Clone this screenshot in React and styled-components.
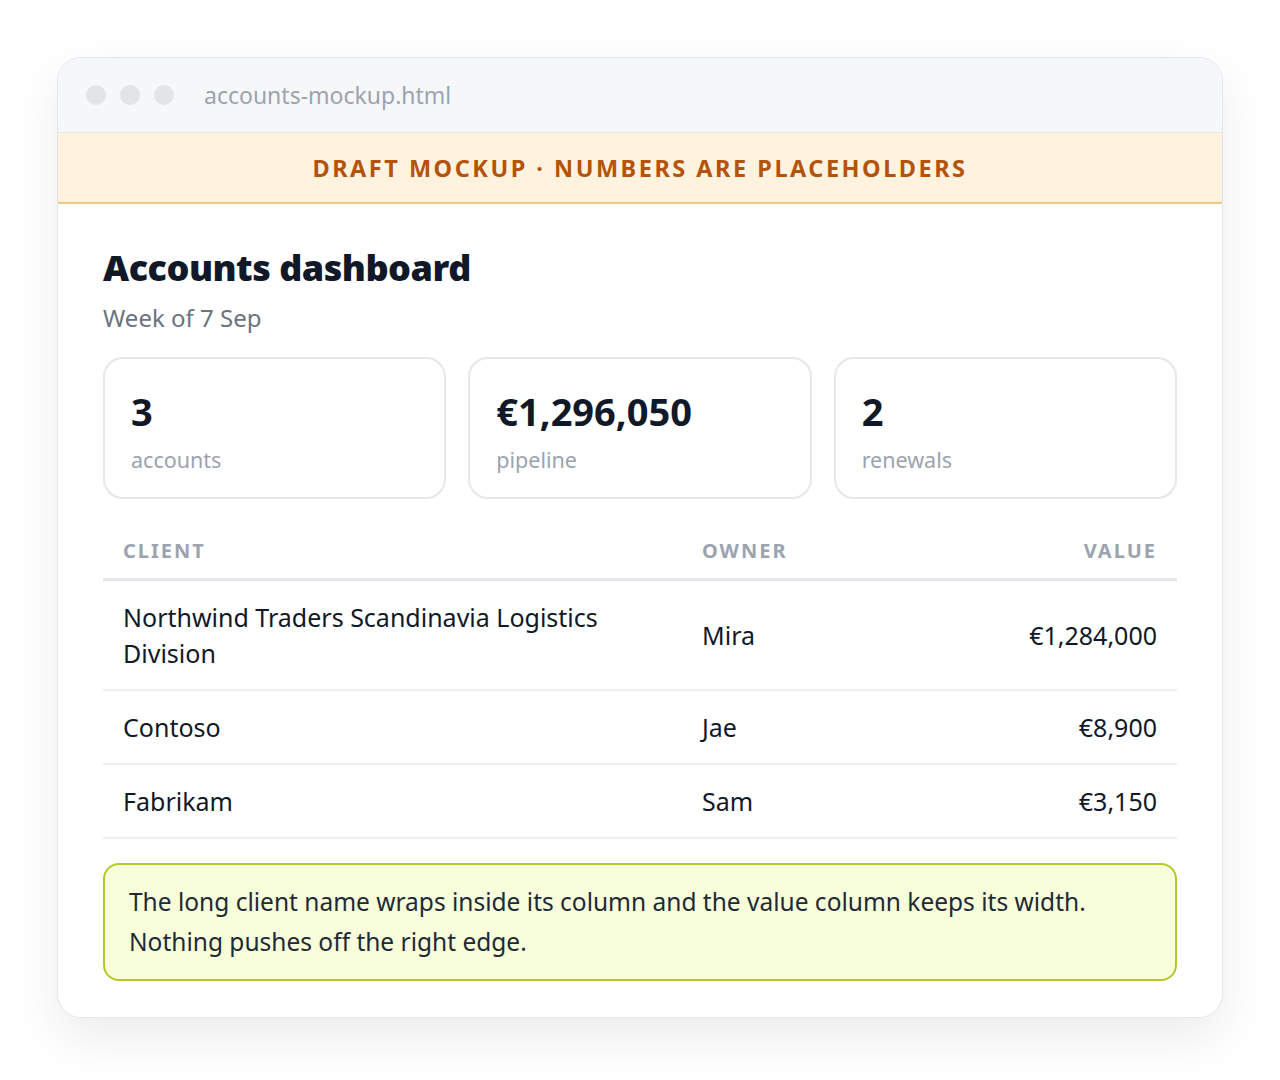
import React from "react";
import styled, { createGlobalStyle } from "styled-components";

const Global = createGlobalStyle`
  body { margin: 0; background: #fff; font-family: "Noto Sans", "Open Sans", sans-serif; }
`;

const Stage = styled.div`
  padding: 57px 57px 58px 57px;
`;

const Window = styled.div`
  border: 1px solid #e5e7eb;
  border-radius: 24px;
  overflow: hidden;
  background: #fff;
  box-shadow: 0 20px 50px rgba(0, 0, 0, 0.08);
`;

const TitleBar = styled.div`
  height: 74px;
  background: #f6f7f9;
  border-bottom: 1px solid #e5e7eb;
  display: flex;
  align-items: center;
  padding-left: 28px;
  gap: 14px;
`;

const Dot = styled.span`
  width: 20px;
  height: 20px;
  border-radius: 50%;
  background: #e2e4e8;
`;

const Url = styled.span`
  margin-left: 16px;
  font-size: 23px;
  color: #9ca3af;
`;

const Banner = styled.div`
  height: 69px;
  background: #fff3e0;
  border-bottom: 2px solid #f1c985;
  display: flex;
  align-items: center;
  justify-content: center;
  color: #b45309;
  font-weight: 700;
  font-size: 23.5px;
  letter-spacing: 2.5px;
`;

const Body = styled.div`
  padding: 39px 45px 36px;
`;

const Title = styled.h1`
  margin: 0;
  font-size: 36px;
  font-weight: 900;
  color: #111827;
  letter-spacing: -0.5px;
  line-height: 50px;
`;

const Sub = styled.div`
  font-size: 24px;
  color: #6b7280;
  margin-top: 8px;
`;

const Stats = styled.div`
  display: grid;
  grid-template-columns: repeat(3, 1fr);
  gap: 22px;
  margin-top: 23px;
`;

const Card = styled.div`
  height: 142px;
  box-sizing: border-box;
  border: 2px solid #e5e7eb;
  border-radius: 20px;
  padding: 27px 26px;
`;

const Num = styled.div`
  font-size: 38px;
  font-weight: 700;
  color: #111827;
  line-height: 50px;
`;

const Label = styled.div`
  font-size: 21.5px;
  color: #9ca3af;
  margin-top: 9px;
`;

const Table = styled.table`
  width: 100%;
  border-collapse: collapse;
  margin-top: 28px;
  table-layout: fixed;
`;

const Th = styled.th`
  text-align: ${(p) => p.$align || "left"};
  font-size: 20px;
  font-weight: 700;
  letter-spacing: 2px;
  color: #9ca3af;
  padding: 10px 20px 14px;
  border-bottom: 3px solid #e5e7eb;
  width: ${(p) => p.$w || "auto"};
`;

const Td = styled.td`
  text-align: ${(p) => p.$align || "left"};
  font-size: 25px;
  color: #111827;
  padding: 18px 20px;
  line-height: 36px;
  border-bottom: 2px solid #eeeff1;
`;

const Note = styled.div`
  margin-top: 24px;
  border: 2px solid #b6c829;
  background: #f7fed9;
  border-radius: 16px;
  padding: 17px 24px;
  font-size: 24.5px;
  line-height: 40px;
  color: #1f2937;
`;

const rows = [
  ["Northwind Traders Scandinavia Logistics Division", "Mira", "€1,284,000"],
  ["Contoso", "Jae", "€8,900"],
  ["Fabrikam", "Sam", "€3,150"],
];

export default function App() {
  return (
    <Stage>
      <Global />
      <Window>
        <TitleBar>
          <Dot />
          <Dot />
          <Dot />
          <Url>accounts-mockup.html</Url>
        </TitleBar>
        <Banner>DRAFT MOCKUP · NUMBERS ARE PLACEHOLDERS</Banner>
        <Body>
          <Title>Accounts dashboard</Title>
          <Sub>Week of 7 Sep</Sub>
          <Stats>
            <Card><Num>3</Num><Label>accounts</Label></Card>
            <Card><Num>€1,296,050</Num><Label>pipeline</Label></Card>
            <Card><Num>2</Num><Label>renewals</Label></Card>
          </Stats>
          <Table>
            <thead>
              <tr>
                <Th $w="539px">CLIENT</Th>
                <Th>OWNER</Th>
                <Th $align="right">VALUE</Th>
              </tr>
            </thead>
            <tbody>
              {rows.map((r) => (
                <tr key={r[0]}>
                  <Td>{r[0]}</Td>
                  <Td>{r[1]}</Td>
                  <Td $align="right">{r[2]}</Td>
                </tr>
              ))}
            </tbody>
          </Table>
          <Note>
            The long client name wraps inside its column and the value column keeps its width.
            Nothing pushes off the right edge.
          </Note>
        </Body>
      </Window>
    </Stage>
  );
}
